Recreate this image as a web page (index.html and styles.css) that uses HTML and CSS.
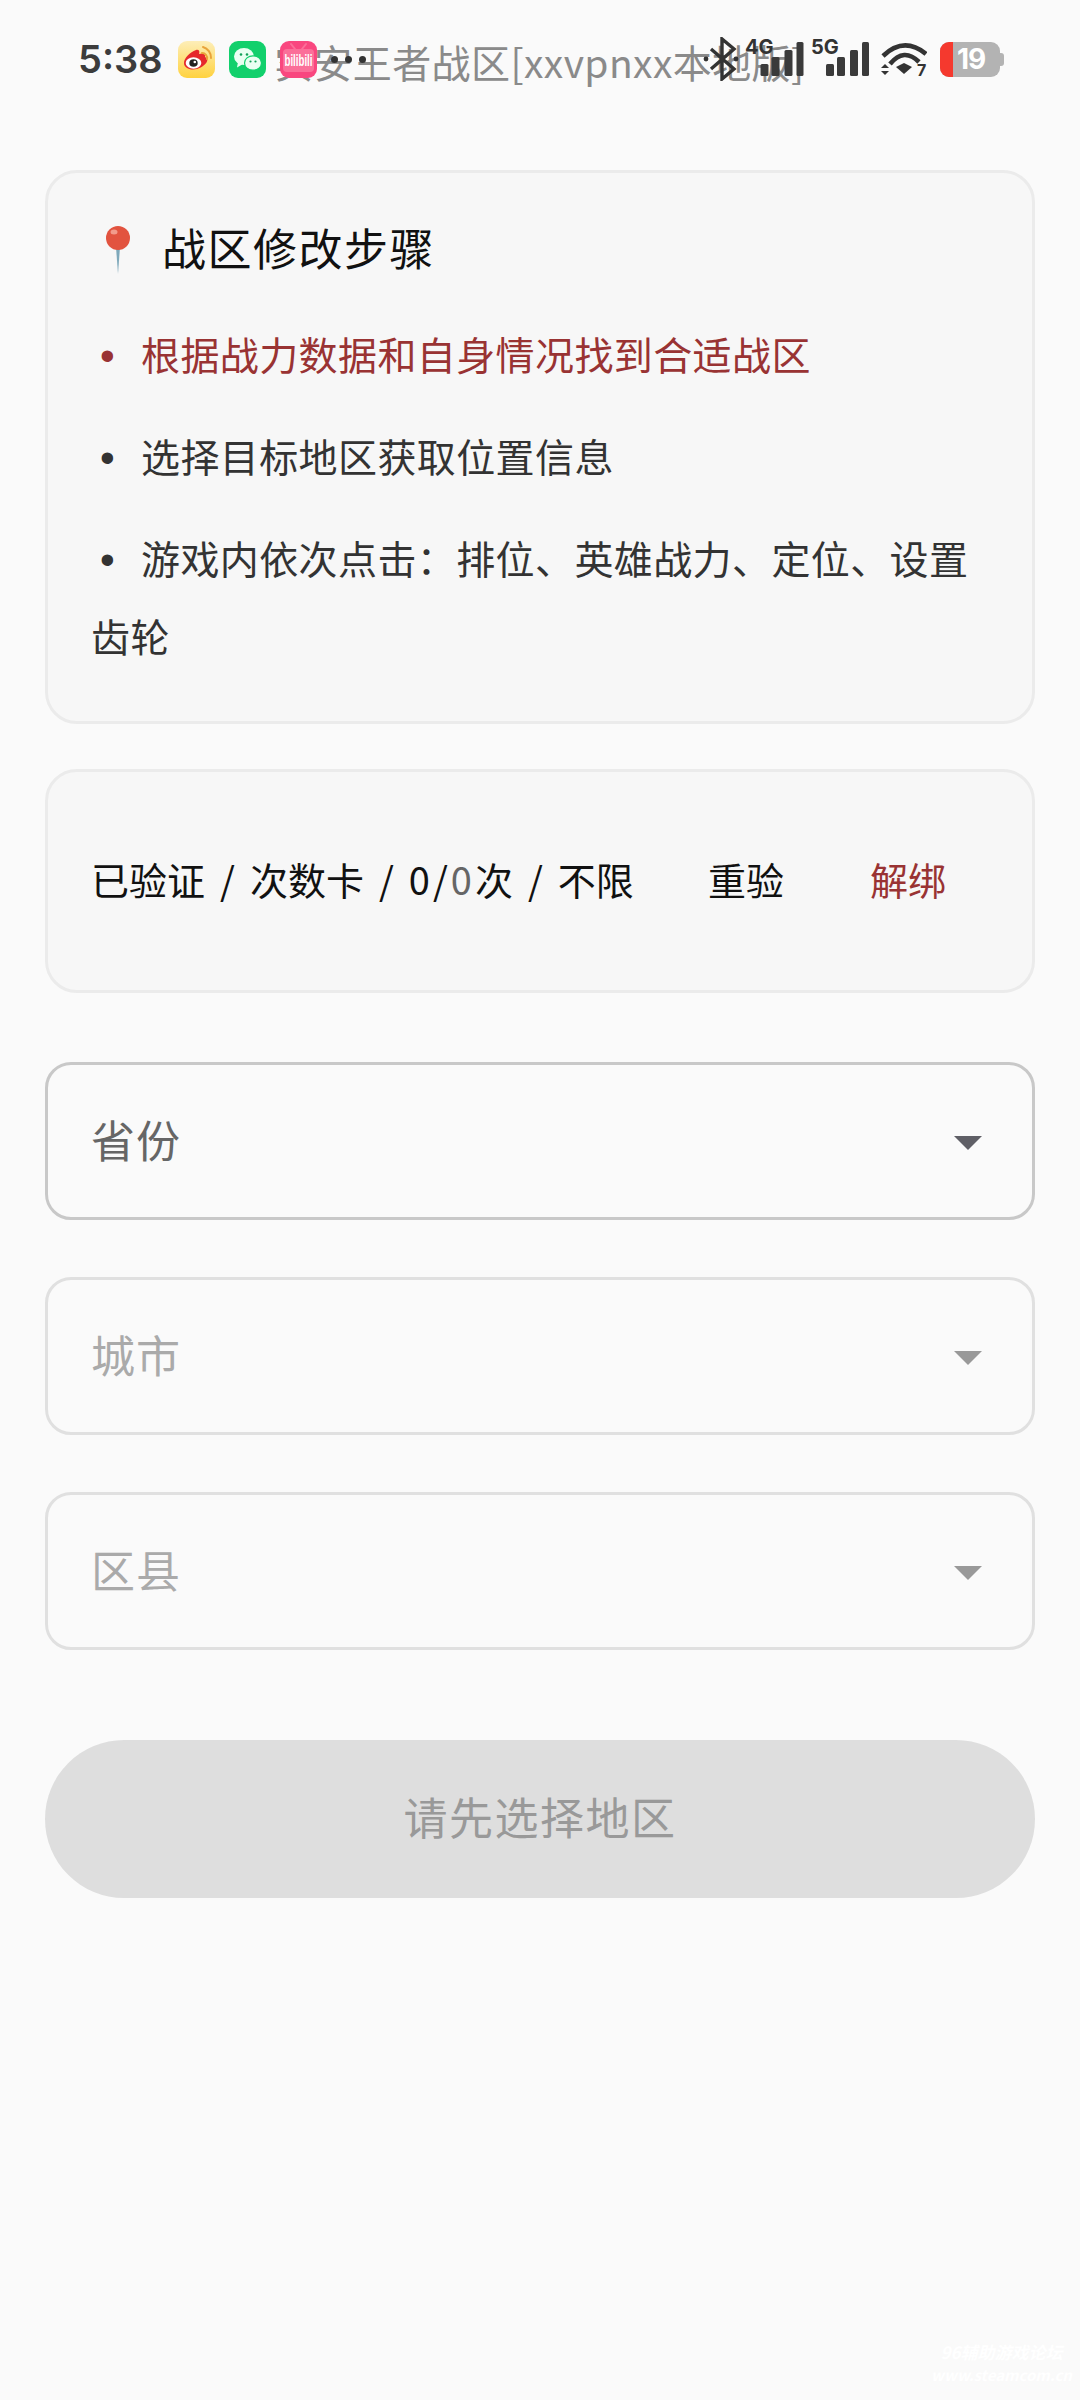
FILE: index.html
```html
<!DOCTYPE html>
<html lang="zh-CN">
  <head>
    <meta charset="UTF-8" />
    <meta name="viewport" content="width=device-width, initial-scale=1.0" />
    <title>战区修改</title>
    <link rel="stylesheet" href="styles.css">
  </head>

  <body>
    <!-- Status bar -->
    <div class="status-bar">
      <span class="time">5:38</span>
      <div class="app-icons">
        <svg class="app-icon" viewBox="0 0 37 37">
          <defs>
            <linearGradient id="weiboBg" x1="0" y1="0" x2="0" y2="1">
              <stop offset="0" stop-color="#fdeeb8" />
              <stop offset="1" stop-color="#ffd23f" />
            </linearGradient>
          </defs>
          <rect width="37" height="37" rx="9" fill="url(#weiboBg)" />
          <path d="M6 22c0-5 6-11 12-13 3-.8 4 1.500 3 4 4-1.500 7 0 6 3 2.500 1 3 3 1.500 5.500-3 4-8 7-13.500 7-5 0-9-2.500-9-6.500z" fill="#e6282c" />
          <ellipse cx="15.500" cy="22" rx="7.800" ry="5.800" fill="#fff" />
          <ellipse cx="15.500" cy="22" rx="4.200" ry="3.800" fill="#222" />
          <circle cx="16.800" cy="21" r="1.300" fill="#fff" />
          <path d="M24 12a5 5 0 0 1 5 6M25 6a11 11 0 0 1 8 11" fill="none" stroke="#e8a33a" stroke-width="2" stroke-linecap="round" />
        </svg>
        <svg class="app-icon" viewBox="0 0 37 37">
          <rect width="37" height="37" rx="9" fill="#12d06c" />
          <ellipse cx="15" cy="15.500" rx="10" ry="8.500" fill="#eafff2" />
          <path d="M9 21l-1 5.500 6-3.500z" fill="#eafff2" />
          <ellipse cx="24" cy="22" rx="8.500" ry="7.200" fill="#eafff2" stroke="#12d06c" stroke-width="1.200" />
          <circle cx="12" cy="13.500" r="1.300" fill="#12a058" />
          <circle cx="18" cy="13.500" r="1.300" fill="#12a058" />
          <circle cx="21.500" cy="20.500" r="1.100" fill="#12a058" />
          <circle cx="26.500" cy="20.500" r="1.100" fill="#12a058" />
        </svg>
        <svg class="app-icon" viewBox="0 0 37 37">
          <rect width="37" height="37" rx="9" fill="#f9477f" />
          <rect x="3" y="8" width="31" height="23" rx="4" fill="#fb6f99" />
          <path d="M11 3l4 5M26 3l-4 5" stroke="#fb6f99" stroke-width="2" stroke-linecap="round" />
          <text class="bili-text" x="4.500" y="25" textLength="28" lengthAdjust="spacingAndGlyphs">bilibili</text>
        </svg>
      </div>
      <div class="sys-icons">
        <svg class="ic-bt" viewBox="0 0 38 44">
          <path d="M9 12l23 20-12 10V2l12 10L9 32" fill="none" stroke="#333" stroke-width="3.400" />
          <circle cx="4" cy="22" r="2.400" fill="#333" />
          <circle cx="34" cy="22" r="2.400" fill="#333" />
        </svg>
        <div class="signal signal-4g">
          <span class="net-label">4G</span>
          <svg class="ic-bars" viewBox="0 0 43 34">
            <rect x="0" y="22" width="8" height="12" rx="1.500" />
            <rect x="11" y="15" width="8" height="19" rx="1.500" />
            <rect x="24" y="8" width="8" height="26" rx="1.500" />
            <rect x="36" y="0" width="7" height="34" rx="1.500" />
          </svg>
        </div>
        <div class="signal signal-5g">
          <span class="net-label">5G</span>
          <svg class="ic-bars" viewBox="0 0 43 34">
            <rect x="0" y="22" width="8" height="12" rx="1.500" />
            <rect x="11" y="15" width="8" height="19" rx="1.500" />
            <rect x="24" y="8" width="8" height="26" rx="1.500" />
            <rect x="36" y="0" width="7" height="34" rx="1.500" />
          </svg>
        </div>
        <svg class="ic-wifi" viewBox="0 0 46 36">
          <path d="M2 15Q23-5 45 13M9 23Q23 6 38 21" fill="none" stroke="#333" stroke-width="4.600" />
          <path d="M15 26L23 22 31 26 23 33z" fill="#333" />
          <path d="M0 27l4-4 4 4zM0 30l4 4 4-4z" fill="#333" />
          <text class="wifi-num" x="36" y="35">7</text>
        </svg>
        <div class="battery">
          <span class="battery-low"></span>
          <span class="battery-num">19</span>
          <span class="battery-tip"></span>
        </div>
      </div>
      <span class="app-title">实安王者战区[xxvpnxx本地版]</span>
      <span class="more-dots"><i></i><i></i><i></i></span>
    </div>

    <div class="main-content">
      <!-- 步骤 -->
      <div class="card steps">
        <h2 class="steps-title">
          <svg class="pin" viewBox="0 0 26 50">
            <path d="M11 22h4l-2 27z" fill="#7fa9bb" />
            <circle cx="13" cy="13" r="12" fill="#e2533f" />
            <ellipse cx="9" cy="7" rx="3.500" ry="2.500" fill="#f29b8b" />
          </svg>
          战区修改步骤
        </h2>
        <p class="step step-hot"><span class="dot">•</span>根据战力数据和自身情况找到合适战区</p>
        <p class="step"><span class="dot">•</span>选择目标地区获取位置信息</p>
        <p class="step"><span class="dot">•</span>游戏内依次点击：排位、英雄战力、定位、设置齿轮</p>
      </div>

      <!-- 卡密状态 -->
      <div class="card license">
        <span class="license-info">已验证 / 次数卡 / <span class="ratio">0/<span class="count">0</span></span>次 / 不限</span>
        <button class="link-btn">重验</button>
        <button class="link-btn link-danger">解绑</button>
      </div>

      <!-- 地区选择 -->
      <div class="select active"><span>省份</span><i class="caret"></i></div>
      <div class="select"><span>城市</span><i class="caret"></i></div>
      <div class="select"><span>区县</span><i class="caret"></i></div>

      <button class="submit" disabled>请先选择地区</button>
    </div>

    <div class="watermark">
      <div class="wm-name">96辅助游戏论坛</div>
      <div class="wm-url">www.steamcom.cn</div>
    </div>
  </body>
</html>
```

FILE: styles.css
```css
* {
  margin: 0;
  padding: 0;
  box-sizing: border-box;
  font-family: "Noto Sans CJK SC", "Noto Sans", sans-serif;
}

body {
  position: relative;
  width: 1080px;
  height: 2400px;
  overflow: hidden;
  background-color: #fafafa;
}

/* status bar */
.status-bar {
  position: relative;
  display: flex;
  align-items: center;
  height: 118px;
  padding: 0 76px 0 78px;
}

.time {
  font-family: Inter, sans-serif;
  font-size: 38px;
  font-weight: 600;
  color: #3c3c3c;
}

.app-icons {
  position: relative;
  z-index: 2;
  display: flex;
  gap: 14px;
  margin-left: 15px;
}

.app-icon {
  width: 37px;
  height: 37px;
}

.bili-text {
  font-family: "Liberation Sans", sans-serif;
  font-size: 16px;
  font-weight: 700;
  fill: #fff;
}

.sys-icons {
  position: relative;
  z-index: 2;
  display: flex;
  align-items: center;
  margin-left: auto;
}

.ic-bt {
  width: 38px;
  height: 44px;
}

.signal {
  position: relative;
  height: 34px;
}

.signal-4g {
  width: 44px;
  margin-left: 20px;
}

.signal-5g {
  width: 43px;
  margin-left: 22px;
}

.net-label {
  position: absolute;
  left: -15px;
  top: -5px;
  font-family: Inter, sans-serif;
  font-size: 20px;
  line-height: 20px;
  font-weight: 700;
  color: #333;
}

.ic-bars {
  display: block;
  width: 100%;
  height: 34px;
  fill: #3a3a3a;
}

.ic-wifi {
  width: 46px;
  height: 36px;
  margin-left: 12px;
}

.wifi-num {
  font-family: Inter, sans-serif;
  font-size: 16px;
  font-weight: 700;
  fill: #333;
}

.battery {
  position: relative;
  display: flex;
  align-items: center;
  width: 60px;
  height: 35px;
  margin-left: 13px;
  margin-right: 4px;
  border-radius: 9px;
  background-color: #b3b3b3;
}

.battery-low {
  width: 13px;
  height: 35px;
  border-radius: 9px 0 0 9px;
  background-color: #f5392e;
}

.battery-num {
  margin-left: 4px;
  font-family: Inter, sans-serif;
  font-size: 28px;
  font-weight: 700;
  letter-spacing: -1px;
  color: #fff;
}

.battery-tip {
  position: absolute;
  right: -4px;
  top: 11px;
  width: 4px;
  height: 13px;
  border-radius: 0 3px 3px 0;
  background-color: #b3b3b3;
}

.app-title {
  position: absolute;
  left: 274px;
  top: 33px;
  font-size: 39px;
  line-height: 56px;
  letter-spacing: 0.4px;
  color: #8a8a8a;
  white-space: nowrap;
}

.more-dots {
  position: absolute;
  left: 331px;
  top: 56px;
  z-index: 1;
  display: flex;
  gap: 7px;
}

.more-dots i {
  width: 7px;
  height: 7px;
  border-radius: 50%;
  background-color: #333;
}

/* content */
.main-content {
  display: flex;
  flex-direction: column;
  padding: 52px 45px 0;
}

.card {
  background-color: #f7f7f7;
  border: 3px solid #ebebeb;
  border-radius: 32px;
}

.steps {
  height: 554px;
  padding: 40px 43px 0;
}

.steps-title {
  display: flex;
  align-items: center;
  gap: 31px;
  height: 68px;
  font-size: 44px;
  font-weight: 400;
  letter-spacing: 1.500px;
  color: #111;
}

.pin {
  width: 26px;
  height: 50px;
  margin: 6px 0 0 14px;
}

.step {
  margin-top: 24px;
  font-size: 39px;
  line-height: 78px;
  letter-spacing: 0.4px;
  color: #333;
}

.steps-title + .step {
  margin-top: 33px;
}

.dot {
  display: inline-block;
  width: 50px;
  padding-left: 9px;
  font-family: "Liberation Sans", sans-serif;
  font-size: 42px;
  line-height: 1;
}

.step-hot {
  color: #993333;
}

.license {
  display: flex;
  align-items: center;
  height: 224px;
  margin-top: 45px;
  padding: 0 43px 6px;
}

.license-info {
  width: 617px;
  font-size: 38px;
  word-spacing: 6.500px;
  color: #111;
  white-space: nowrap;
}

.ratio {
  letter-spacing: 3px;
}

.count {
  color: #666;
}

.link-btn {
  width: 76px;
  border: none;
  background: none;
  font-size: 38px;
  color: #111;
  text-align: center;
}

.link-danger {
  margin-left: 86px;
  color: #993333;
}

.select {
  display: flex;
  align-items: center;
  justify-content: space-between;
  height: 158px;
  margin-top: 57px;
  padding: 0 50px 0 43px;
  border: 3px solid #e0e0e0;
  border-radius: 26px;
  font-size: 44px;
  letter-spacing: 1px;
  color: #aaa;
}

.select span {
  margin-top: -5px;
}

.license + .select {
  margin-top: 69px;
}

.select.active {
  border-color: #c8c8c8;
  color: #666;
}

.caret {
  width: 0;
  height: 0;
  margin-top: 3px;
  border-left: 14px solid transparent;
  border-right: 14px solid transparent;
  border-top: 14px solid #999;
}

.select.active .caret {
  border-top-color: #5f5f66;
}

.submit {
  height: 158px;
  margin-top: 90px;
  padding-bottom: 6px;
  border: none;
  border-radius: 79px;
  background-color: #dedede;
  font-size: 44px;
  letter-spacing: 1.500px;
  color: #999;
}

.watermark {
  position: absolute;
  right: 8px;
  bottom: 14px;
  color: #fff;
  text-align: center;
  font-weight: 700;
  font-style: italic;
}

.wm-name {
  font-size: 17px;
  line-height: 24px;
}

.wm-url {
  font-size: 15px;
  line-height: 22px;
}
```
